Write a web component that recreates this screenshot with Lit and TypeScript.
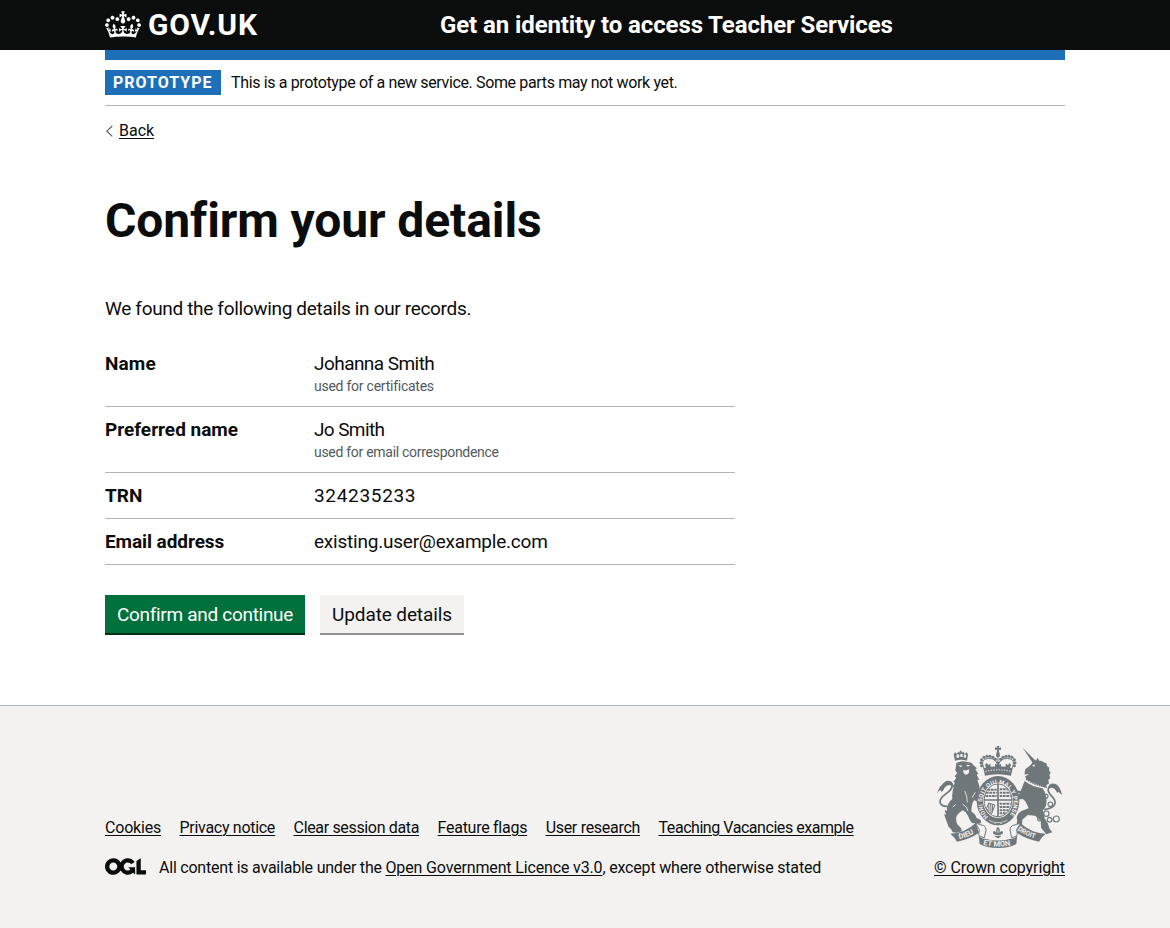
import { LitElement, html, css, svg } from "lit";
import { customElement } from "lit/decorators.js";

const crown = svg`<path fill="currentColor" fill-rule="evenodd" d="M25 30.2c3.5 1.5 7.7-.2 9.1-3.7 1.5-3.6-.2-7.8-3.9-9.2-3.6-1.4-7.6.3-9.1 3.9-1.4 3.5.3 7.5 3.9 9zM9 39.5c3.6 1.5 7.8-.2 9.2-3.7 1.5-3.6-.2-7.8-3.9-9.1-3.6-1.5-7.6.2-9.1 3.8-1.4 3.5.3 7.5 3.8 9zM4.4 57.2c3.5 1.5 7.7-.2 9.1-3.8 1.5-3.6-.2-7.7-3.9-9.1-3.5-1.5-7.6.3-9.1 3.8-1.4 3.5.3 7.6 3.9 9.1zm38.3-21.4c3.5 1.5 7.7-.2 9.1-3.8 1.5-3.6-.2-7.7-3.9-9.1-3.6-1.5-7.6.3-9.1 3.8-1.3 3.6.4 7.7 3.9 9.1zm64.4-5.6c-3.6 1.5-7.8-.2-9.1-3.7-1.5-3.6.2-7.8 3.8-9.2 3.6-1.4 7.7.3 9.2 3.9 1.3 3.5-.4 7.5-3.9 9zm15.9 9.3c-3.6 1.5-7.7-.2-9.1-3.7-1.5-3.6.2-7.8 3.7-9.1 3.6-1.5 7.7.2 9.2 3.8 1.5 3.5-.3 7.5-3.8 9zm4.7 17.7c-3.6 1.5-7.8-.2-9.2-3.8-1.5-3.6.2-7.7 3.9-9.1 3.6-1.5 7.7.3 9.2 3.8 1.3 3.5-.4 7.6-3.9 9.1zM89.3 35.8c-3.6 1.5-7.8-.2-9.2-3.8-1.4-3.6.2-7.7 3.9-9.1 3.6-1.5 7.7.3 9.2 3.8 1.4 3.6-.3 7.7-3.9 9.1zM69.7 17.7l8.9 4.7V9.3l-8.9 2.8c-.2-.3-.5-.6-.9-.9L72.4 0H59.6l3.5 11.2c-.3.3-.6.5-.9.9l-8.8-2.8v13.1l8.8-4.7c.3.3.6.7.9.9l-5 15.4v.1c-.2.8-.4 1.6-.4 2.4 0 4.1 3.1 7.5 7 8.1h.2c.3 0 .7.1 1 .1.4 0 .7 0 1-.1h.2c4-.6 7.1-4.1 7.1-8.1 0-.8-.1-1.7-.4-2.4V34l-5.1-15.4c.4-.2.7-.6 1-.9zM66 92.8c16.9 0 32.8 1.1 47.1 3.2 4-16.9 8.9-26.7 14-33.5l-9.6-3.4c1 4.9 1.1 7.2 0 10.2-1.5-1.4-3-4.3-4.2-8.7L108.6 76c2.8-2 5-3.2 7.5-3.3-4.4 9.4-10 11.9-13.6 11.2-4.3-.8-6.3-4.6-5.6-7.9 1-4.7 5.7-5.9 8-.5 4.3-8.7-3-11.4-7.6-8.8 7.1-7.2 7.9-13.5 2.1-21.1-8 6.1-8.1 12.3-4.5 20.8-4.7-5.4-12.1-2.5-9.5 6.2 3.4-5.2 7.9-2 7.2 3.1-.6 4.3-6.4 7.8-13.5 7.2-10.3-.9-10.9-8-11.2-13.8 2.5-.5 7.1 1.8 11 7.3L80.2 60c-4.1 4.4-8 5.3-12.3 5.4 1.4-4.4 8-11.6 8-11.6H55.5s6.4 7.2 7.9 11.6c-4.2-.1-8-1-12.3-5.4l1.4 16.4c3.9-5.5 8.5-7.7 10.9-7.3-.3 5.8-.9 12.8-11.1 13.8-7.2.6-12.9-2.9-13.5-7.2-.7-5 3.8-8.3 7.1-3.1 2.7-8.7-4.6-11.6-9.4-6.2 3.7-8.5 3.6-14.7-4.6-20.8-5.8 7.6-5 13.9 2.2 21.1-4.7-2.6-11.9.1-7.7 8.8 2.3-5.5 7.1-4.2 8.1.5.7 3.3-1.3 7.1-5.7 7.9-3.5.7-9-1.8-13.5-11.2 2.5.1 4.7 1.3 7.5 3.3l-4.7-15.4c-1.2 4.4-2.7 7.2-4.3 8.7-1.1-3-.9-5.3 0-10.2l-9.5 3.4c5 6.9 9.9 16.7 14 33.5 14.8-2.1 30.8-3.2 47.7-3.2z"/>`;

const licenceLogo = svg`<path fill="currentColor" d="M421.5 142.8V.1l-50.7 32.3v161.1h112.4v-50.7zm-122.3-9.6A47.12 47.12 0 0 1 221 97.8c0-26 21.1-47.1 47.1-47.1 16.7 0 31.4 8.7 39.7 21.8l42.7-27.2A97.63 97.63 0 0 0 268.1 0c-36.5 0-68.3 20.1-85.1 49.7A98 98 0 0 0 97.8 0C43.9 0 0 43.9 0 97.8s43.9 97.8 97.8 97.8c36.5 0 68.3-20.1 85.1-49.7a97.76 97.76 0 0 0 149.6 25.4l19.4 22.2h3v-87.8h-80l24.3 27.5zM97.8 145c-26 0-47.1-21.1-47.1-47.1s21.1-47.1 47.1-47.1 47.1 21.1 47.1 47.1S123.8 145 97.8 145"/>`;

/* Royal coat of arms */
@customElement("royal-arms")
export class RoyalArms extends LitElement {
  static styles = css`
    :host { display: block; width: 125px; height: 102px; color: #6f777b; }
    svg { display: block; width: 100%; height: 100%; }
    .ink { fill: currentColor; }
    .line { fill: none; stroke: currentColor; }
    .paper { fill: #f3f2f1; }
    .paper-line { fill: none; stroke: #f3f2f1; }
    text { font-family: Roboto, "Liberation Sans", sans-serif; font-weight: 700; fill: #f3f2f1; letter-spacing: 0; }
  `;
  render() {
    const pearls = [[170, 92], [168, 83], [170, 74], [177, 67], [186, 64], [195, 64], [204, 67], [211, 73], [227, 73], [234, 67], [243, 64], [252, 64], [261, 67], [268, 74], [270, 83], [268, 92]];
    const rings: [number, number, number][] = [[363, 184, 6], [376, 208, 7], [364, 236, 8], [345, 251, 7], [355, 266, 6], [374, 254, 7], [394, 252, 9]];
    return html`<svg viewBox="36 33 375 306" aria-hidden="true">
      <!-- lion -->
      <path class="ink" d="M90 77l-4-20 6-5 3 5 5-7 3 3 2-6h4l2 6 4-3 5 7 4-5 5 5-3 20q-18-5-36 0z"/>
      <path class="paper" d="M94 60l5-3 5 5-3 6-6 1zm14-4l5 2v8h-6l-2-5zm10 1l6 4-2 8-6-2z"/>
      <path class="ink" d="M94 84Q110 76 127 81l12 2 8 9 9 8-5 3 9 13-5 3 8 15-6 1 6 17q2 14-4 22l12 10q16-2 18 10 0 10-10 14-10 2-14-6l-18-6-5 10q-4 16-2 25 12 6 14 17l12 6q5 8-1 12l-24-2q-8-9-12-22-6-12-16-16-12 8-18 16-4 12 2 26l10 10 4 10q-12 8-28 4-4-12-12-16l-14-38 6 1-4-14 7 2 0-12q6-16 16-24-2-18 4-34l-4-1 8-13-5-2 9-13-5-4 8-10-6-7z"/>
      <path class="paper" d="M100 91l12 1-5 5zm23-2l13 1-7 5zm-9 15q9 5 18-1 2 10-3 14l-8 2q-7-5-7-15z"/>
      <path class="paper-line" stroke-width="2.5" d="M119 168q8 14 8 34m24-30-10 16m-28 20q14 6 16 20m-46-12 10-8"/>
      <path class="line" stroke-width="5" d="M68 214C50 216 40 204 48 191c9-16 36-22 33-41-3-13-24-10-27 6"/>
      <path class="ink" d="M36 177q5-20 14-26 12-18 26-12 10 4 8 16-14-12-26 4-2 8-8 12l-4-6q-6 2-10 12z"/>
      <!-- unicorn -->
      <path class="ink" d="M293 38l42 42-9 8z"/>
      <path class="ink" d="M299 112l2-9 16-13 8-11 9-3 3-8 6 9q10-1 15 6l6 1 2 9 7 5-1 8 5 8-4 6 3 10-6 4 2 12-8 4 2 10-12-5-50-22-4-8 12-9-13 3z"/>
      <path class="paper" d="M321 92l9-4-2 7z"/>
      <path class="line" stroke-width="8" stroke-dasharray="5 2" d="M304 131q26 18 56 22"/>
      <path class="ink" d="M299 138q24 18 54 22 16 24 10 52-4 10-10 14 6 12 5 22l10 16 6 18 8 10-18 6-16-20 0-20-18-16-22-2-16 14-1 18-6 10-10 6q-8-2-10-6l8-8q6-18 2-24 2-18 20-24l16-6q-8-22-18-28l-18 2-4 14-12-4 4-14 18-8-14-8-8 4-10-2q-4-8 2-12 10-2 14 2l22 2z"/>
      <path class="paper" d="M275 172l10 4-9 3zM276 150l8 5-9 2z"/>
      <path class="line" stroke-width="5" d="M358 224c24-4 38-14 30-30-6-12-22-20-18-32 4-12 18-12 26-4"/>
      <path class="ink" d="M368 160q4-18 22-14 14 4 21 32-7-2-10-8l-5 4q-6-20-28-14z"/>
      ${rings.map(([x, y, r]) => svg`<circle class="line" stroke-width="3.4" cx=${x} cy=${y} r=${r} />`)}
      <!-- crown -->
      <path class="ink" d="M215 33h8l-2 6 7-2v8l-7-1 3 13h-10l3-13-7 1v-8l7 2z"/>
      <circle class="ink" cx="219" cy="61" r="6"/>
      ${pearls.map(([x, y]) => svg`<circle class="ink" cx=${x} cy=${y} r="4.6" />`)}
      <path class="line" stroke-width="3" d="M179 105q-18-34 13-35 24 1 27 26 3-25 27-26 31 1 13 35M219 66v30"/>
      <path class="ink" d="M175 100q44-12 88 0l-5 22q-39-9-78 0zM185 84l5 6 7-4-1 12h-13l-3-9zM213 80h12l-4 9 7-2v11h-18v-11l7 2zM242 86l7 4 5-6 4 5-3 9h-13z"/>
      <path class="paper-line" stroke-width="3" stroke-dasharray="4 4" d="M181 109q38-9 76 0"/>
      <!-- garter and shield -->
      <ellipse class="ink" cx="219" cy="197" rx="64" ry="74"/>
      <ellipse class="paper" cx="219" cy="196" rx="45" ry="53"/>
      <path id="garter" fill="none" d="M190 246A47.5 55.5 0 1 1 248 246"/>
      <text font-size="17.5" textLength="250" lengthAdjust="spacing"><textPath href="#garter">HONI SOIT QUI MAL Y PENSE</textPath></text>
      <ellipse class="line" stroke-width="3" cx="219" cy="196" rx="41.5" ry="49.5"/>
      <path class="line" stroke-width="5" d="M219 147v98M176 195h86"/>
      <path class="line" stroke-width="6" stroke-dasharray="8 2" d="M188 164h27m-32 9h32m-34 10h34m9 23h33m-33 10h31m-31 10h27m-27 9h20"/>
      <path class="line" stroke-width="6" stroke-dasharray="8 2" d="M224 163h25m-25 10h31m-31 10h33"/>
      <path class="line" stroke-width="3" d="M191 204l-6 17q6 11 15 15l10-26zm6 2 1 25m5-23-1 23m-11-25 1 21"/>
      <path class="paper-line" stroke-width="2" d="M191 256q28 14 56 0"/>
      <circle class="paper" cx="210" cy="265" r="2"/><circle class="paper" cx="228" cy="265" r="2"/>
      <!-- motto ribbon -->
      <path class="ink" d="M76 296q45-2 76-32l10 29q-24 18-66 27-6-12-20-24z"/>
      <path class="ink" d="M362 296q-45-2-76-32l-10 29q24 18 66 27 6-12 20-24z"/>
      <path class="paper" stroke="currentColor" stroke-width="3" d="M151 264q14 5 25 8 8 4 7 14l-5 22q-14-1-17-10l2-14zM287 264q-14 5-25 8-8 4-7 14l5 22q14-1 17-10l-2-14z"/>
      <path class="ink" d="M161 300q6 12 20 11 38 11 76 0 14 1 20-11l-3 27q-20 12-55 12t-55-12z"/>
      <path class="ink" d="M219 275q9 9 4 18 9-10 11-1 0 7-8 7h-2l4 6-9 5-9-5 4-6h-2q-8 0-8-7 2-9 11 1-5-9 4-18z"/>
      <path class="paper" d="M219 282q4 6 0 15-4-9 0-15zm-7 18h14v2h-14z"/>
      <path id="left-motto" fill="none" d="M103 312q30-5 58-26"/>
      <path id="right-motto" fill="none" d="M277 284q25 21 64 29"/>
      <path id="base-motto" fill="none" d="M174 329q45 11 96 0"/>
      <text font-size="22"><textPath href="#left-motto">DIEU</textPath></text>
      <text font-size="20.5"><textPath href="#right-motto">DROIT</textPath></text>
      <text font-size="22.5"><textPath href="#base-motto">ET MON</textPath></text>
    </svg>`;
  }
}

interface Detail { key: string; value: string; hint?: string; keyClass: string; valueClass: string; hintClass?: string; }

const details: Detail[] = [
  { key: "Name", value: "Johanna Smith", hint: "used for certificates", keyClass: "k-name", valueClass: "v-name", hintClass: "h-name" },
  { key: "Preferred name", value: "Jo Smith", hint: "used for email correspondence", keyClass: "", valueClass: "v-preferred", hintClass: "h-preferred" },
  { key: "TRN", value: "324235233", keyClass: "", valueClass: "v-trn" },
  { key: "Email address", value: "existing.user@example.com", keyClass: "k-email", valueClass: "v-email" },
];

const footerLinks = [
  ["Cookies", "f-cookies"],
  ["Privacy notice", "f-privacy"],
  ["Clear session data", "f-clear"],
  ["Feature flags", "f-flags"],
  ["User research", "f-research"],
  ["Teaching Vacancies example", "f-vacancies"],
];

@customElement("app-root")
export class AppRoot extends LitElement {
  static styles = css`
    :host {
      display: flex; flex-direction: column; min-height: 928px;
      font: 400 16px/20px Roboto, "Liberation Sans", sans-serif;
      color: #0b0c0c; background: #fff; white-space: nowrap;
    }
    * { box-sizing: border-box; }
    .width { width: 960px; margin: 0 auto; }
    a { color: inherit; text-decoration: underline; text-decoration-thickness: 1px; text-underline-offset: 2px; }
    header { background: #0b0c0c; color: #fff; height: 50px; }
    .header-row { display: flex; height: 50px; }
    .brand { width: 335px; display: flex; gap: 7px; padding-top: 10px; }
    .brand svg { width: 36px; height: 27px; margin-top: 1px; }
    .brand span { font-size: 30px; font-weight: 700; line-height: 30px; letter-spacing: 0.85px; }
    .service { font-size: 24px; font-weight: 700; line-height: 50px; letter-spacing: -0.1px; }
    .bar { height: 10px; background: #1d70b8; }
    .phase { display: flex; gap: 10px; padding: 10px 0; border-bottom: 1px solid #b1b4b6; height: 46px; }
    .tag { background: #1d70b8; color: #fff; font-weight: 700; line-height: 25px; width: 116px; padding-left: 8px; letter-spacing: 1px; }
    .phase-text { line-height: 26px; letter-spacing: -0.36px; }
    .back { display: flex; gap: 6px; align-items: center; margin-top: 15px; height: 20px; }
    .back svg { width: 8px; height: 12px; }
    h1 { margin: 55px 0 50px; font-size: 48px; line-height: 50px; font-weight: 700; letter-spacing: -0.1px; }
    .lead { margin: 0 0 20px; font-size: 19px; line-height: 25px; letter-spacing: -0.33px; }
    dl { margin: 0 0 30px; width: 630px; font-size: 19px; line-height: 25px; }
    .row { display: grid; grid-template-columns: 209px 1fr; padding: 10px 0; border-bottom: 1px solid #b1b4b6; }
    dt { font-weight: 700; }
    dd { margin: 0; }
    .hint { font-size: 14px; line-height: 20px; color: #505a5f; }
    .k-name { letter-spacing: 0.15px; } .k-email { letter-spacing: -0.08px; }
    .v-name { letter-spacing: -0.55px; } .v-preferred { letter-spacing: -0.62px; }
    .v-trn { letter-spacing: 0.68px; } .v-email { letter-spacing: -0.22px; }
    .h-name { letter-spacing: -0.25px; } .h-preferred { letter-spacing: -0.29px; }
    .buttons { display: flex; gap: 15px; margin-bottom: 70px; }
    button { font: inherit; font-size: 19px; line-height: 38px; height: 40px; border: 0; padding: 1px 0 0; text-align: center; }
    .primary { width: 200px; background: #00703c; color: #fff; border-bottom: 2px solid #002d18; letter-spacing: -0.3px; }
    .secondary { width: 144px; background: #f3f2f1; color: #0b0c0c; border-bottom: 2px solid #929191; letter-spacing: -0.12px; }
    footer { flex: 1; border-top: 1px solid #b1b4b6; background: #f3f2f1; padding-top: 40px; }
    .footer-row { display: flex; justify-content: space-between; }
    .meta { padding-top: 72px; }
    nav { display: flex; gap: 18.5px; margin-bottom: 20px; }
    .licence { display: flex; gap: 13px; }
    .licence svg { width: 41px; height: 17px; }
    .l-before { letter-spacing: -0.22px; } .l-link { letter-spacing: -0.15px; } .l-after { letter-spacing: -0.18px; }
    .copyright { display: flex; flex-direction: column; align-items: center; gap: 10px; letter-spacing: -0.09px; }
    .f-cookies { letter-spacing: -0.2px; } .f-privacy { letter-spacing: -0.29px; } .f-clear { letter-spacing: -0.34px; }
    .f-flags { letter-spacing: -0.27px; } .f-research { letter-spacing: -0.29px; } .f-vacancies { letter-spacing: -0.45px; }
  `;
  render() {
    return html`
      <header>
        <div class="width header-row">
          <div class="brand"><svg viewBox="0 0 132 97" aria-hidden="true">${crown}</svg><span>GOV.UK</span></div>
          <div class="service">Get an identity to access Teacher Services</div>
        </div>
      </header>
      <div class="width">
        <div class="bar"></div>
        <div class="phase"><strong class="tag">PROTOTYPE</strong><span class="phase-text">This is a prototype of a new service. Some parts may not work yet.</span></div>
        <div class="back"><svg viewBox="0 0 8 12" aria-hidden="true"><path d="M7.3 1L1.8 6.2l5.5 5.2" fill="none" stroke="#505a5f" stroke-width="1.1"/></svg><a>Back</a></div>
        <main>
          <h1>Confirm your details</h1>
          <p class="lead">We found the following details in our records.</p>
          <dl>${details.map((d) => html`<div class="row">
            <dt class=${d.keyClass}>${d.key}</dt>
            <dd><div class=${d.valueClass}>${d.value}</div>${d.hint ? html`<div class="hint ${d.hintClass}">${d.hint}</div>` : ""}</dd>
          </div>`)}</dl>
          <div class="buttons"><button class="primary">Confirm and continue</button><button class="secondary">Update details</button></div>
        </main>
      </div>
      <footer>
        <div class="width footer-row">
          <div class="meta">
            <nav>${footerLinks.map(([label, cls]) => html`<a class=${cls}>${label}</a>`)}</nav>
            <div class="licence"><svg viewBox="0 0 483.2 195.7" aria-hidden="true">${licenceLogo}</svg><span><span class="l-before">All content is available under the </span><a class="l-link">Open Government Licence v3.0</a><span class="l-after">, except where otherwise stated</span></span></div>
          </div>
          <div class="copyright"><royal-arms></royal-arms><a>© Crown copyright</a></div>
        </div>
      </footer>
    `;
  }
}
